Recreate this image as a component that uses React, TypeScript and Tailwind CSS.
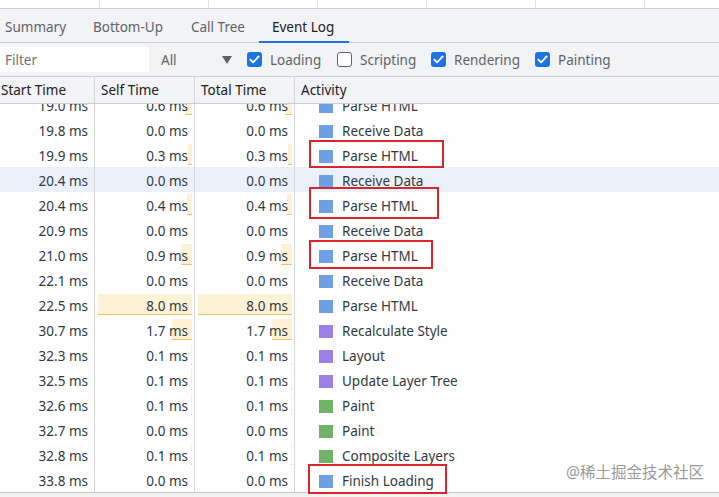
import React from "react";

type Row = { start: string; self: number; total: number; name: string; kind: "load" | "render" | "paint" };

const rows: Row[] = [
  { start: "19.0", self: 0.6, total: 0.6, name: "Parse HTML", kind: "load" },
  { start: "19.8", self: 0.0, total: 0.0, name: "Receive Data", kind: "load" },
  { start: "19.9", self: 0.3, total: 0.3, name: "Parse HTML", kind: "load" },
  { start: "20.4", self: 0.0, total: 0.0, name: "Receive Data", kind: "load" },
  { start: "20.4", self: 0.4, total: 0.4, name: "Parse HTML", kind: "load" },
  { start: "20.9", self: 0.0, total: 0.0, name: "Receive Data", kind: "load" },
  { start: "21.0", self: 0.9, total: 0.9, name: "Parse HTML", kind: "load" },
  { start: "22.1", self: 0.0, total: 0.0, name: "Receive Data", kind: "load" },
  { start: "22.5", self: 8.0, total: 8.0, name: "Parse HTML", kind: "load" },
  { start: "30.7", self: 1.7, total: 1.7, name: "Recalculate Style", kind: "render" },
  { start: "32.3", self: 0.1, total: 0.1, name: "Layout", kind: "render" },
  { start: "32.5", self: 0.1, total: 0.1, name: "Update Layer Tree", kind: "render" },
  { start: "32.6", self: 0.1, total: 0.1, name: "Paint", kind: "paint" },
  { start: "32.7", self: 0.0, total: 0.0, name: "Paint", kind: "paint" },
  { start: "32.8", self: 0.1, total: 0.1, name: "Composite Layers", kind: "paint" },
  { start: "33.8", self: 0.0, total: 0.0, name: "Finish Loading", kind: "load" },
];

const swatch: Record<Row["kind"], string> = {
  load: "bg-[#6fa0e3]",
  render: "bg-[#9b80e6]",
  paint: "bg-[#71b366]",
};

function Check({ on }: { on: boolean }) {
  return on ? (
    <span className="flex h-[15px] w-[15px] items-center justify-center rounded-[3px] bg-[#1a73e8]">
      <svg width="11" height="9" viewBox="0 0 11 9" fill="none">
        <path d="M1.3 4.6 L4.1 7.3 L9.7 1.4" stroke="white" strokeWidth="1.9" strokeLinecap="round" strokeLinejoin="round" />
      </svg>
    </span>
  ) : (
    <span className="h-[15px] w-[15px] rounded-[3px] border border-[#5f6368] bg-white" />
  );
}

function TimeCell({ v }: { v: number }) {
  const w = Math.round((v / 8.0) * 94);
  return (
    <div className="relative flex h-full w-[100px] shrink-0 items-center justify-end border-r border-[#d3d6da] pr-[6px] pt-[4px]">
      {w > 0 && (
        <div
          className="absolute right-[2px] top-[2px] h-[21px] border-b border-[#f2c564] bg-[#fdf1d6]"
          style={{ width: w }}
        />
      )}
      <span className="relative">{v.toFixed(1)} ms</span>
    </div>
  );
}

export default function App() {
  const tabs = [
    { label: "Summary", w: "w-[88px]" },
    { label: "Bottom-Up", w: "w-[98px]" },
    { label: "Call Tree", w: "w-[81px]" },
    { label: "Event Log", w: "w-[90px]", active: true },
  ];
  return (
    <div
      className="relative h-[497px] w-[719px] overflow-hidden bg-white text-[13.5px] text-[#303942]"
      style={{ fontFamily: '"Noto Sans", "Open Sans", "Noto Sans CJK SC", sans-serif' }}
    >
      {/* top strip */}
      <div className="flex h-[9px] overflow-hidden border-b border-[#cbcdd1] bg-white">
        <div className="ml-[-9px] flex">
          {[0, 1, 2, 3, 4, 5, 6].map((i) => (
            <div key={i} className="relative h-[9px] w-[109px] shrink-0 border-r border-[#e3e3e3]">
              {i === 0 && (
                <span className="absolute left-[24px] top-[-12px] leading-none text-[#5f6368]">Frames</span>
              )}
            </div>
          ))}
        </div>
      </div>

      {/* tabs */}
      <div className="flex h-[34px] border-b border-[#cbcdd1] bg-[#f1f3f4]">
        <div className="ml-[-8px] flex">
          {tabs.map((t) => (
            <div
              key={t.label}
              className={`relative flex h-full items-center pl-[13px] pt-[4px] ${t.w} ${t.active ? "text-[#202124]" : "text-[#5f6368]"}`}
            >
              {t.label}
              {t.active && <div className="absolute bottom-[-1px] left-0 right-0 h-[2px] bg-[#1a73e8]" />}
            </div>
          ))}
        </div>
      </div>

      {/* toolbar */}
      <div className="flex h-[34px] items-center border-b border-[#cbcdd1] bg-[#f1f3f4] text-[#5f6368]">
        <div className="flex h-[25px] w-[149px] items-center bg-white pl-[5px] pt-[2px] text-[#6e7276]">Filter</div>
        <div className="ml-[12px] flex w-[71px] items-center justify-between pt-[1px]">
          <span className="pt-[1px]">All</span>
          <svg width="10" height="8" viewBox="0 0 10 8">
            <path d="M0 0 H10 L5 8 Z" fill="#5f6368" />
          </svg>
        </div>
        <div className="ml-[15px] flex">
          <label className="flex w-[90px] items-center gap-[8px]">
            <Check on />
            <span className="pt-[2px]">Loading</span>
          </label>
          <label className="flex w-[94px] items-center gap-[8px]">
            <Check on={false} />
            <span className="pt-[2px]">Scripting</span>
          </label>
          <label className="flex w-[104px] items-center gap-[8px]">
            <Check on />
            <span className="pt-[2px]">Rendering</span>
          </label>
          <label className="flex items-center gap-[8px]">
            <Check on />
            <span className="pt-[2px]">Painting</span>
          </label>
        </div>
      </div>

      {/* table header */}
      <div className="flex h-[27px] border-b border-[#cbcdd1] bg-[#f1f3f4] text-[#202124]">
        <div className="ml-[-5px] flex">
          {["Start Time", "Self Time", "Total Time"].map((h) => (
            <div key={h} className="flex h-full w-[100px] items-center border-r border-[#d3d6da] pl-[6px] pt-[1px]">
              {h}
            </div>
          ))}
          <div className="flex h-full items-center pl-[6px] pt-[1px]">Activity</div>
        </div>
      </div>

      {/* table body */}
      <div className="h-[388px] overflow-hidden">
        <div className="mt-[-12px]">
          {rows.map((r, i) => (
            <div key={i} className={`flex h-[25px] ${i === 3 ? "bg-[#ebf1fb]" : ""}`}>
              <div className="ml-[-5px] flex h-full">
                <div className="flex h-full w-[100px] items-center justify-end border-r border-[#d3d6da] pr-[6px] pt-[4px]">
                  {r.start} ms
                </div>
                <TimeCell v={r.self} />
                <TimeCell v={r.total} />
                <div className="flex h-full items-center pl-[24px] pt-[4px]">
                  <span className={`h-[13px] w-[14px] ${swatch[r.kind]}`} />
                  <span className="ml-[9px]">{r.name}</span>
                </div>
              </div>
            </div>
          ))}
        </div>
      </div>

      {/* bottom */}
      <div className="h-[5px] border-t border-[#c4c7cb] bg-[#f3f3f3]" />

      {/* annotation boxes */}
      <div className="absolute left-[309px] top-[140px] h-[28px] w-[135px] border-2 border-[#d7262e]" />
      <div className="absolute left-[309px] top-[187px] h-[32px] w-[130px] border-2 border-[#d7262e]" />
      <div className="absolute left-[309px] top-[240px] h-[29px] w-[124px] border-2 border-[#d7262e]" />
      <div className="absolute left-[308px] top-[464px] h-[30px] w-[139px] border-2 border-[#d7262e]" />

      {/* watermark */}
      <div className="absolute left-[566px] top-[461px] text-[15.5px] text-[#9a9a9a]">@稀土掘金技术社区</div>
    </div>
  );
}
